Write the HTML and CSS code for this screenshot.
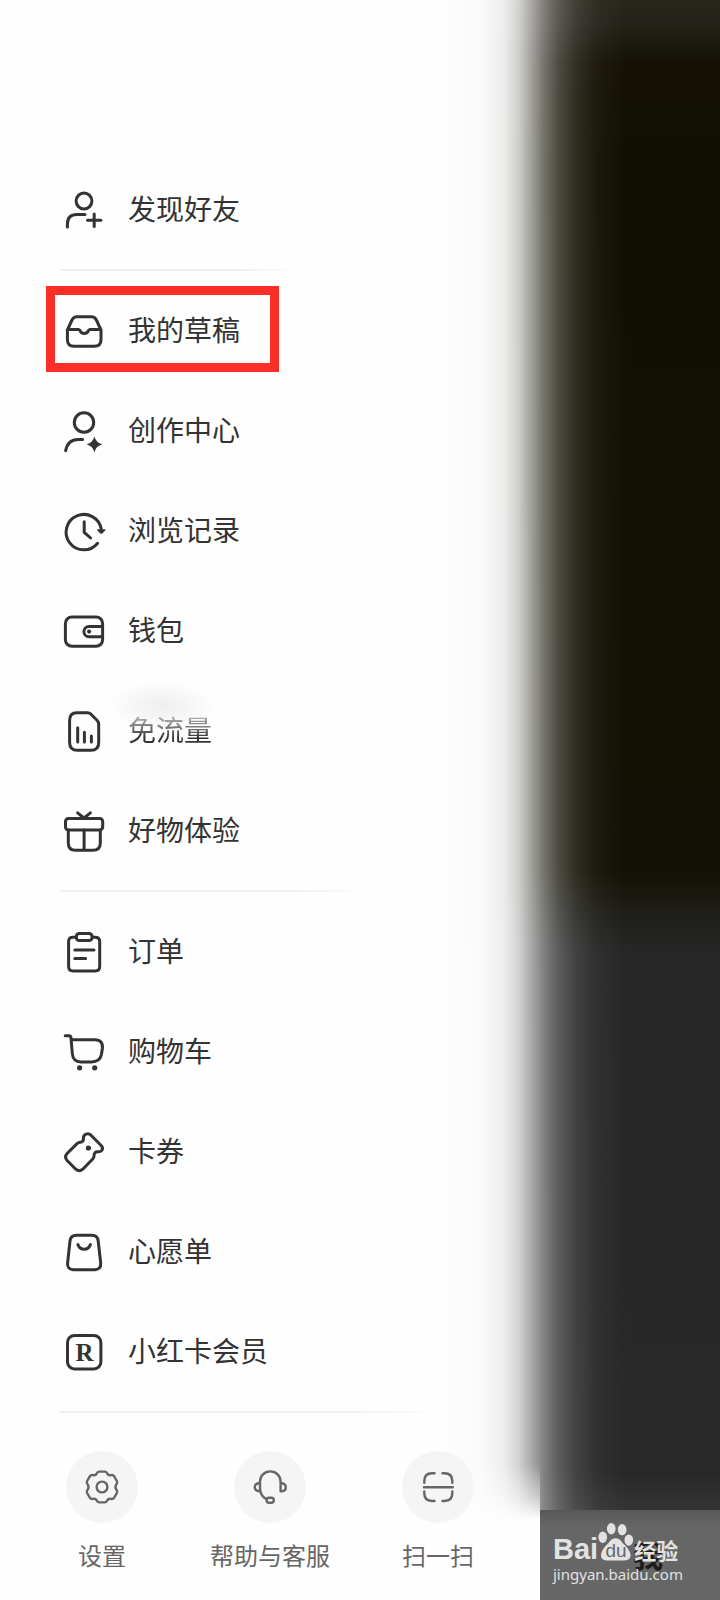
FILE: index.html
```html
<!DOCTYPE html>
<html lang="zh-CN">
<head>
<meta charset="utf-8">
<meta name="viewport" content="width=device-width, initial-scale=1">
<title>侧边菜单</title>
<link rel="stylesheet" href="styles.css">
</head>
<body>
<div class="screen">
  <aside class="drawer">
    <nav class="menu">
      <a class="item" href="#"><svg class="icon" viewBox="0 0 40 40"><circle cx="20" cy="11" r="7.9"/><path d="M3.4 37V34Q3.4 24.6 13 24.6H21M23.5 30.2H37M30.2 24V36.5"/></svg><span>发现好友</span></a>
      <hr class="rule rule-short">
      <a class="item item-marked" href="#"><svg class="icon" viewBox="0 0 40 40"><path d="M3.4 19L8 9Q9.7 5.8 13 5.8H27.3Q30.8 5.8 32.4 9L37 19V28.5Q37 35.3 30.3 35.3H10.2Q3.4 35.3 3.4 28.5ZM3.4 18.6H14.5Q16 18.8 16.5 20.5Q17.5 22.4 20.2 22.4Q23 22.4 24 20.5Q24.5 18.8 26 18.6H37"/></svg><span>我的草稿</span></a>
      <a class="item" href="#"><svg class="icon" viewBox="0 0 40 40"><circle cx="20" cy="11.5" r="9.7"/><path d="M1.6 39.6Q4 28.4 14 28.4H18.6"/><path class="solid" d="M30.4 25.4Q32 31.7 38.3 33.3Q32 35 30.4 41.3Q28.8 35 22.5 33.3Q28.8 31.7 30.4 25.4Z"/></svg><span>创作中心</span></a>
      <a class="item" href="#"><svg class="icon" viewBox="0 0 40 40"><path d="M37.3 18.3A17.7 17.7 0 1 0 33.6 32.3M20.2 10.8V21.3L26.6 27"/><path class="solid" d="M33.4 18.3H41.2Q41.8 18.8 41.2 19.4L38.3 22.4Q37.3 23.2 36.3 22.4L33.4 19.4Q32.8 18.8 33.4 18.3Z"/></svg><span>浏览记录</span></a>
      <a class="item" href="#"><svg class="icon" viewBox="0 0 40 40"><rect x="1.4" y="6" width="37.2" height="29.3" rx="6.5"/><path d="M38.6 15.6H25A5.1 5.1 0 0 0 25 25.8H38.6"/><circle class="solid" cx="25.1" cy="20.6" r="2.1"/></svg><span>钱包</span></a>
      <a class="item item-faded" href="#"><svg class="icon" viewBox="0 0 40 40"><path d="M12.8 1.8H23.5Q25.5 1.8 27 3.2L33 9.2Q34.7 11 34.7 13V31.5Q34.7 39.3 27 39.3H13.4Q5.6 39.3 5.6 31.5V9.5Q5.6 1.8 12.8 1.8ZM13.7 16.8V31M20.4 21.2V31M27.4 25V31"/></svg><span>免流量</span></a>
      <a class="item" href="#"><svg class="icon" viewBox="0 0 40 40"><rect x="1.5" y="7.4" width="37.2" height="11.6" rx="3"/><path d="M4.3 19V32Q4.3 39.3 11.5 39.3H28.8Q36.3 39.3 36.3 32V19M20.1 19V39.3M13.6 1.8L20 7L26.4 1.8"/></svg><span>好物体验</span></a>
      <hr class="rule rule-medium">
      <a class="item" href="#"><svg class="icon" viewBox="0 0 40 40"><path d="M12.3 5.2H9Q4.6 5.2 4.6 9.6V34.6Q4.6 39 9 39H31.2Q35.7 39 35.7 34.6V9.6Q35.7 5.2 31.2 5.2H28.2M10.8 18H30M10.8 26.4H21.6"/><rect x="12.3" y="1.5" width="15.8" height="7" rx="3"/></svg><span>订单</span></a>
      <a class="item" href="#"><svg class="icon" viewBox="0 0 40 40"><path d="M1.2 3.8H5Q6.8 3.8 7 5.8L8.3 21.5Q9 29.9 17 29.9H27.5Q35.8 29.9 37.3 23L38.4 16.5Q39.3 7.8 30.8 7.8H7.3"/><circle class="solid" cx="15.6" cy="35.8" r="2.6"/><circle class="solid" cx="30.7" cy="35.8" r="2.6"/></svg><span>购物车</span></a>
      <a class="item" href="#"><svg class="icon" viewBox="0 0 40 40"><path d="M27 3.2L37.4 13.7Q39.6 16.2 37.6 18.6Q36.4 20 33.7 19.8Q30 19.8 30.1 23.4Q30.2 25.5 28.5 27.3L18.8 37.2Q15.3 40.2 11.8 37.2L3.1 28.5Q0 25 3.1 21.5L13 11.6Q14.6 10.2 16.5 10.3Q19.6 10.1 19.4 7Q19.2 4.2 20.6 3Q24 .4 27 3.2Z"/><circle class="solid" cx="24.4" cy="16" r="2.6"/></svg><span>卡券</span></a>
      <a class="item" href="#"><svg class="icon" viewBox="0 0 40 40"><path d="M12.5 3.3H28Q33.5 3.3 34.2 9L36.7 31Q37.2 37.7 30.5 37.7H9.8Q3 37.7 3.6 31L6 9Q6.6 3.3 12.5 3.3ZM13.9 12.6Q15.8 17.3 20.2 17.3Q24.5 17.3 26.4 12.6"/></svg><span>心愿单</span></a>
      <a class="item" href="#"><svg class="icon" viewBox="0 0 40 40"><rect x="3.5" y="3.5" width="33.4" height="33.4" rx="7"/><text class="badge-letter" x="20.5" y="29" text-anchor="middle">R</text></svg><span>小红卡会员</span></a>
      <hr class="rule">
    </nav>
    <footer class="tools">
      <button class="tool" type="button"><span class="disc"><svg class="tool-icon" viewBox="-18 -18 36 36"><path d="M-2.8-15.4H2.8Q4.6-15.2 5.3-13.4Q6.4-11.2 8.8-11.8Q11-12.4 12.2-10.7L14.9-6Q15.7-4.2 14.5-2.9Q12.4 0 14.5 2.9Q15.7 4.2 14.9 6L12.2 10.7Q11 12.4 8.8 11.8Q6.4 11.2 5.3 13.4Q4.6 15.2 2.8 15.4H-2.8Q-4.6 15.2-5.3 13.4Q-6.4 11.2-8.8 11.8Q-11 12.4-12.2 10.7L-14.9 6Q-15.7 4.2-14.5 2.9Q-12.4 0-14.5-2.9Q-15.7-4.2-14.9-6L-12.2-10.7Q-11-12.4-8.8-11.8Q-6.4-11.2-5.3-13.4Q-4.6-15.2-2.8-15.4Z"/><circle r="5.4"/></svg></span><span>设置</span></button>
      <button class="tool" type="button"><span class="disc"><svg class="tool-icon" viewBox="0 0 36 36"><path d="M14.5 30.2Q8 27 8 19V12.5A10.3 10.1 0 0 1 28.6 12.5V22.3M8 14Q2.7 14.5 2.7 18.2Q2.7 21.8 8 22.3M28.6 14Q33.8 14.5 33.8 18.2Q33.8 22.3 28.6 22.3"/><rect x="14.6" y="28.7" width="7.2" height="5" rx="2.5"/></svg></span><span>帮助与客服</span></button>
      <button class="tool" type="button"><span class="disc"><svg class="tool-icon" viewBox="0 0 36 36"><path d="M14.5 4.2H12Q4.3 4.2 4.3 12V13.8M22.5 4.2H24.5Q32.3 4.2 32.3 12V13.8M4.3 22.5V24.3Q4.3 32 12 32H14.5M32.3 22.5V24.3Q32.3 32 24.5 32H22.5M4 18.2H32.8"/></svg></span><span>扫一扫</span></button>
    </footer>
  </aside>
  <div class="page-behind">
    <div class="tabbar">
      <span class="tab-label">我</span>
      <div class="watermark">
        <div class="brand"><span class="brand-bai">Bai</span><svg class="paw" viewBox="0 0 38 42"><ellipse cx="5" cy="16" rx="4.6" ry="6"/><ellipse cx="14" cy="7" rx="4.6" ry="6"/><ellipse cx="25.5" cy="8" rx="4.6" ry="6"/><ellipse cx="32.5" cy="19" rx="4.6" ry="6"/><path d="M18.5 17Q23 17 26 22Q34 29 34.5 35Q34 40.5 27 40.5H10Q3.5 40.5 3 35Q3.5 29 11 22Q14 17 18.5 17Z"/><text class="paw-text" x="19" y="37" text-anchor="middle">du</text></svg><span class="brand-cn">经验</span></div>
        <div class="site">jingyan.baidu.com</div>
      </div>
    </div>
  </div>
</div>
</body>
</html>
```
FILE: styles.css
```css
*,
*::before {
  box-sizing: border-box;
}

body {
  margin: 0;
  background: #fefefe;
  color: #333;
  font-family: "Noto Sans CJK SC", "Noto Sans", sans-serif;
}

/* White veil on top of the darkened page, so the drawer edge stays soft. */
.screen {
  display: grid;
  grid-template-columns: 3fr 1fr;
  min-height: 100vh;
  background:
    linear-gradient(to right,
      #fefefe 61%,
      rgba(254, 254, 254, .98) 67%,
      rgba(254, 254, 254, .92) 70%,
      rgba(254, 254, 254, .8) 72%,
      rgba(254, 254, 254, .64) 73.5%,
      rgba(254, 254, 254, .42) 75.5%,
      rgba(254, 254, 254, .25) 77.5%,
      rgba(254, 254, 254, .12) 80%,
      rgba(254, 254, 254, .04) 83%,
      rgba(254, 254, 254, 0) 87%),
    linear-gradient(#29251c 0, #24211a 1.5%, #151105 4%, #111000 10%, #131105 54.5%, #1e1d18 57%, #272727 59.5%, #282828 92%, #343434 94.4%);
}

.drawer {
  display: flex;
  flex-direction: column;
  padding-top: 160px;
  background: linear-gradient(rgba(254, 254, 254, 0) 91.5%, rgba(254, 254, 254, .5) 93.6%, #fefefe 95%);
}

.item {
  position: relative;
  display: flex;
  align-items: center;
  gap: 24px;
  height: 100px;
  padding-left: 64px;
  color: inherit;
  font-size: 28px;
  line-height: 40px;
  text-decoration: none;
}

.item span {
  position: relative;
  padding-bottom: 4px;
}

.icon {
  width: 40px;
  height: 40px;
  overflow: visible;
  fill: none;
  stroke: #333;
  stroke-width: 3;
  stroke-linecap: round;
  stroke-linejoin: round;
}

.solid {
  fill: #333;
  stroke: none;
}

.badge-letter {
  fill: #333;
  stroke: none;
  font: bold 25px "Liberation Serif", serif;
}

.item-marked::before {
  content: "";
  position: absolute;
  top: 5px;
  left: 46px;
  width: 233px;
  height: 86px;
  border: 9px solid #fb2e28;
}

.item-faded::before {
  content: "";
  position: absolute;
  top: 0;
  left: 108px;
  width: 108px;
  height: 50px;
  background: radial-gradient(closest-side, #efefef 0, #f4f4f4 40%, rgba(254, 254, 254, 0) 100%);
}

.item-faded span {
  background: linear-gradient(#aaa 20%, #777 42%, #333 65%);
  background-clip: text;
  -webkit-background-clip: text;
  color: transparent;
}

.rule {
  width: 380px;
  height: 2px;
  margin: 9px 0 10px 60px;
  border: 0;
  background: linear-gradient(to right, #f0f0f0 75%, rgba(240, 240, 240, 0));
}

.rule-short {
  width: 240px;
}

.rule-medium {
  width: 310px;
}

.tools {
  display: grid;
  grid-template-columns: repeat(3, 1fr);
  padding: 28px 18px 24px;
}

.tool {
  display: flex;
  flex-direction: column;
  align-items: center;
  gap: 14px;
  padding: 0;
  border: 0;
  background: none;
  color: #666;
  font: inherit;
  font-size: 24px;
  line-height: 36px;
}

.disc {
  display: grid;
  place-items: center;
  width: 72px;
  height: 72px;
  border-radius: 50%;
  background: #f5f5f5;
}

.tool-icon {
  width: 36px;
  height: 36px;
  fill: none;
  stroke: #666;
  stroke-width: 2.4;
  stroke-linecap: round;
  stroke-linejoin: round;
}

.page-behind {
  display: flex;
  flex-direction: column;
  justify-content: flex-end;
}

.tabbar {
  position: relative;
  height: 90px;
  padding: 11px 0 0 13px;
  background: linear-gradient(#585858, #666 18%);
}

.tab-label {
  position: absolute;
  top: 24px;
  left: 93px;
  color: #1c1c1c;
  font-size: 30px;
  font-weight: 700;
  line-height: 40px;
}

.watermark {
  position: relative;
  color: #e2e2e2;
}

.brand {
  display: flex;
  align-items: flex-end;
  height: 42px;
}

.brand-bai {
  font: bold 29px/28px "Liberation Sans", sans-serif;
}

.paw {
  width: 36px;
  height: 42px;
  fill: #e2e2e2;
}

.paw-text {
  fill: #666;
  font: 20px "Liberation Sans", sans-serif;
}

.brand-cn {
  font-size: 22px;
  font-weight: 700;
  line-height: 28px;
}

.site {
  font: 15px/22px "Noto Sans", sans-serif;
}
```
